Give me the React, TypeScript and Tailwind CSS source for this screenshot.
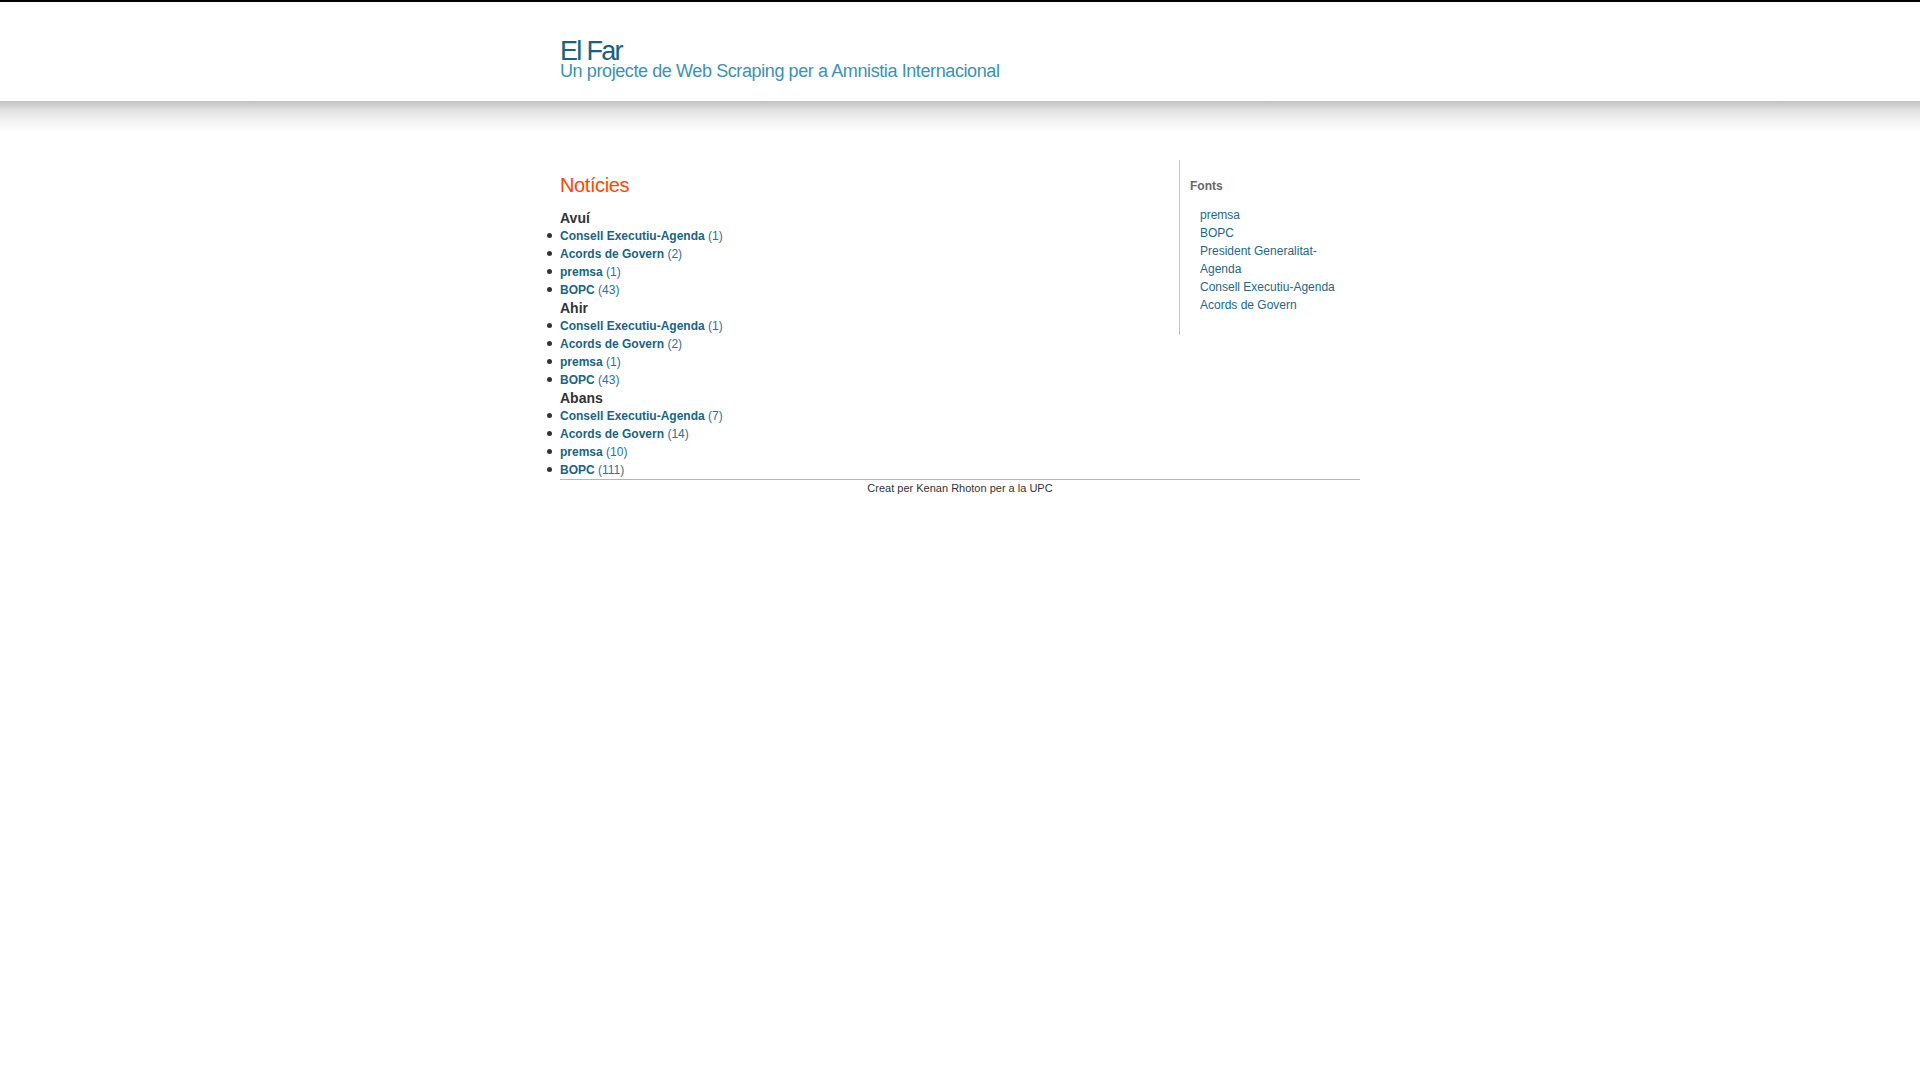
import React from "react";

interface Item {
  name: string;
  count: number;
}

interface Group {
  title: string;
  items: Item[];
}

const groups: Group[] = [
  {
    title: "Avuí",
    items: [
      { name: "Consell Executiu-Agenda", count: 1 },
      { name: "Acords de Govern", count: 2 },
      { name: "premsa", count: 1 },
      { name: "BOPC", count: 43 },
    ],
  },
  {
    title: "Ahir",
    items: [
      { name: "Consell Executiu-Agenda", count: 1 },
      { name: "Acords de Govern", count: 2 },
      { name: "premsa", count: 1 },
      { name: "BOPC", count: 43 },
    ],
  },
  {
    title: "Abans",
    items: [
      { name: "Consell Executiu-Agenda", count: 7 },
      { name: "Acords de Govern", count: 14 },
      { name: "premsa", count: 10 },
      { name: "BOPC", count: 111 },
    ],
  },
];

const sources = [
  "premsa",
  "BOPC",
  "President Generalitat-Agenda",
  "Consell Executiu-Agenda",
  "Acords de Govern",
];

const App: React.FC = () => {
  return (
    <div className="min-h-screen bg-white font-['Liberation_Sans',Arial,sans-serif]">
      {/* header */}
      <div className="h-[101px] border-t-2 border-black pt-[38px]">
        <div className="w-[800px] mx-auto">
          <h1 className="text-[27px] leading-[22px] tracking-[-1.7px] text-[#17627f]">
            El Far
          </h1>
          <p className="text-[18px] leading-[18px] tracking-[-0.4px] text-[#3c92b3]">
            Un projecte de Web Scraping per a Amnistia Internacional
          </p>
        </div>
      </div>
      <div className="h-[32px] bg-[linear-gradient(to_bottom,#c2c2c2,#e2e2e2_30%,#f4f4f4_65%,#ffffff)]" />

      <div className="w-[800px] mx-auto mt-[27px]">
        <div className="flex items-start">
          {/* main column */}
          <div className="flex-1 pt-[13px]">
            <h2 className="text-[20px] leading-[24px] tracking-[-0.4px] text-[#ff4500] mb-[12px]">
              Notícies
            </h2>
            {groups.map((group) => (
              <div key={group.title}>
                <h3 className="text-[14px] leading-[18px] font-bold text-[#333]">
                  {group.title}
                </h3>
                <ul className="text-[12px] leading-[18px]">
                  {group.items.map((item) => (
                    <li
                      key={item.name}
                      className="relative before:content-[''] before:absolute before:left-[-13px] before:top-[6px] before:w-[5px] before:h-[5px] before:rounded-full before:bg-[#333]"
                    >
                      <a href="#" className="font-bold text-[#1a6482]">
                        {item.name}
                      </a>{" "}
                      <span className="text-[#2a7294]">({item.count})</span>
                    </li>
                  ))}
                </ul>
              </div>
            ))}
          </div>

          {/* sidebar */}
          <div className="w-[181px] border-l border-[#c4c4c4] pl-[10px] pr-[10px] pt-[17px] pb-[21px]">
            <h4 className="text-[12px] leading-[18px] font-bold text-[#666]">Fonts</h4>
            <ul className="mt-[11px] pl-[10px] text-[12px] leading-[18px]">
              {sources.map((s) => (
                <li key={s}>
                  <a href="#" className="text-[#1d6886]">
                    {s}
                  </a>
                </li>
              ))}
            </ul>
          </div>
        </div>

        {/* footer */}
        <div className="border-t border-[#b5b5b5] pt-[2px] text-center text-[11px] leading-[13px] text-[#333]">
          Creat per Kenan Rhoton per a la UPC
        </div>
      </div>
    </div>
  );
};

export default App;
